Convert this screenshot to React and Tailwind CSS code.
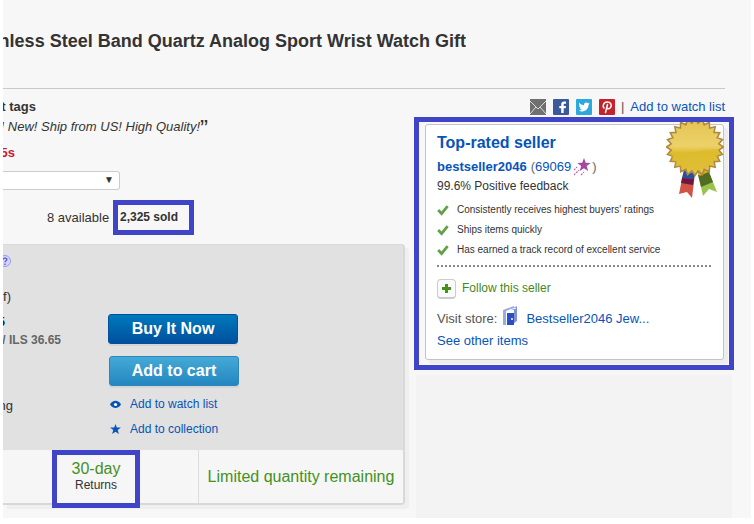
const gold = Array.from({ length: 48 }, (_, i) => {
  const r = i % 2 ? 24 : 28.5;
  const a = (i * Math.PI) / 24;
  return `${(29 + r * Math.sin(a)).toFixed(1)},${(25 - r * Math.cos(a)).toFixed(1)}`;
}).join(" ");

function Clip({ className, children }) {
  return (
    <div className={`flex justify-end overflow-hidden whitespace-nowrap ${className}`}>
      <div className="shrink-0">{children}</div>
    </div>
  );
}

function Medal() {
  return (
    <svg className="absolute -right-px top-[-3px] h-[77px] w-[58px]" viewBox="0 0 58 77" aria-hidden="true">
      <path d="M18 47 29 51 26 76 21 70 13 72Z" fill="#cf5445" />
      <path d="M18 49 29 51 28 57 16 56Z" fill="#2850a0" />
      <path d="M16 56 28 57 27 63 15 61Z" fill="#6c1740" />
      <path d="M32 51 42 48 51 70 43 67 37 74Z" fill="#98c34c" />
      <path d="M32 53 43 50 47 60 35 65Z" fill="#526c22" />
      <path d="M31 50 39 48 42 50 34 54Z" fill="#d7a92e" />
      <defs>
        <linearGradient id="gold" x1="0" y1="0" x2="0" y2="1">
          <stop offset="0" stopColor="#e3c351" />
          <stop offset=".48" stopColor="#ecd16a" />
          <stop offset=".6" stopColor="#dfbd30" />
          <stop offset="1" stopColor="#e2c64a" />
        </linearGradient>
      </defs>
      <polygon points={gold} fill="url(#gold)" stroke="#b18a41" strokeWidth="1.6" />
      <path d="M5 31C19 34 33 26 53 27 52 39 42 48 29 48 17 48 7 42 5 31Z" fill="#ddb92c" opacity=".55" />
    </svg>
  );
}

function Check() {
  return (
    <svg className="h-3 w-3 shrink-0" viewBox="0 0 12 12" aria-hidden="true">
      <path d="M1.2 6 4.6 9.6 10.6 2.2" fill="none" stroke="#63a04a" strokeWidth="2.8" />
    </svg>
  );
}

function Share() {
  const button = "block h-4 w-4 cursor-pointer";
  return (
    <div className="flex h-[28px] items-center justify-end whitespace-nowrap pr-[9px] pt-2 text-[13px] leading-5">
      <div className="flex gap-[7px]">
        <button className={button} aria-label="Email">
          <svg viewBox="0 0 16 16">
            <rect width="16" height="16" fill="#707070" />
            <path d="M0 2 8 10 16 2M0 15 6 8M16 15 10 8" fill="none" stroke="#d9d9d9" strokeWidth="1" />
          </svg>
        </button>
        <button className={button} aria-label="Facebook">
          <svg viewBox="0 0 16 16">
            <rect width="16" height="16" rx="1" fill="#3b5998" />
            <path d="M8.2 14V9.200H6.300V7h1.900V5.400C8.200 3.500 9.300 2.600 11 2.600h2v2.200h-1.300c-.8 0-1 .4-1 1V7H13l-.3 2.200h-2V14Z" fill="#fff" />
          </svg>
        </button>
        <button className={button} aria-label="Twitter">
          <svg viewBox="0 0 16 16">
            <rect width="16" height="16" rx="1" fill="#2ca7e0" />
            <path transform="translate(2.600 2.400) scale(.46)" fill="#fff" d="M23.950 4.570a10 10 0 0 1-2.820.770 4.960 4.960 0 0 0 2.160-2.720c-.95.550-2 .960-3.130 1.180a4.920 4.920 0 0 0-8.380 4.480C7.690 8.090 4.070 6.130 1.640 3.160a4.820 4.820 0 0 0-.67 2.480c0 1.710.87 3.210 2.190 4.100a4.900 4.900 0 0 1-2.230-.62v.06a4.920 4.920 0 0 0 3.950 4.830 5 5 0 0 1-2.210.080 4.940 4.940 0 0 0 4.600 3.420A9.870 9.870 0 0 1 0 19.540a14 14 0 0 0 7.550 2.210c9.050 0 14-7.500 14-13.980 0-.21 0-.42-.02-.63a9.940 9.940 0 0 0 2.420-2.570Z" />
          </svg>
        </button>
        <button className={button} aria-label="Pinterest">
          <svg viewBox="0 0 16 16">
            <rect width="16" height="16" rx="1" fill="#c4232b" />
            <path d="M5 9C3.500 7.500 4 3 8.200 3 12 3 13 6 11.600 8.300 10.300 10.500 8 9.800 7.700 8.500M8.500 5.500 6.500 13.500" fill="none" stroke="#fff" strokeWidth="1.500" strokeLinecap="round" />
          </svg>
        </button>
      </div>
      <span className="mx-1.5 text-[#555]">|</span>
      <a href="#watch" className="text-[#0654ba]">Add to watch list</a>
    </div>
  );
}

function SellerCard() {
  const perks = [
    "Consistently receives highest buyers' ratings",
    "Ships items quickly",
    "Has earned a track record of excellent service",
  ];
  return (
    <section className="border-[5px] border-[#4045c8] pb-[5px] pl-1.5 pr-[5px] pt-0.5">
      <div className="relative rounded-[3px] border border-[#c4c4c4] bg-white px-[11px] pb-2 pt-2 text-[13px] leading-5 shadow-[4px_4px_0_#ededed]">
        <Medal />
        <h2 className="text-base leading-5 font-bold text-[#0654ba]">Top-rated seller</h2>
        <div className="mt-1 flex items-center text-[#666]">
          <a href="#seller" className="text-[#0654ba] font-bold">bestseller2046</a>
          <span className="ml-1">(</span>
          <a href="#feedback" className="text-[#0654ba]">69069</a>
          <svg className="ml-0.5 h-[18px] w-[18px]" viewBox="0 0 18 18" aria-hidden="true">
            <path d="m11 0 1.700 4.800 5 .2-4 3.100 1.400 4.900-4.200-2.800L6.700 13l1.500-4.900-4-3.100 5-.2Z" fill="#a44a9e" />
            <path d="m1 12 3-3M1 17l5-5M8 17l3-3" stroke="#b768b1" strokeWidth="1.300" strokeDasharray="2 1" />
          </svg>
          <span className="ml-px">)</span>
        </div>
        <p className="text-xs leading-[18px] text-[#333]">99.6% Positive feedback</p>
        <ul className="mt-[5px] text-[10px] leading-5 text-[#333]">
          {perks.map((perk) => (
            <li key={perk} className="flex items-center gap-2">
              <Check />
              {perk}
            </li>
          ))}
        </ul>
        <div className="mr-px mt-[5px] border-t-2 border-dotted border-[#888]" />
        <div className="mt-3 flex items-start gap-1.5">
          <button aria-label="Follow" className="flex h-5 w-[19px] items-center justify-center rounded-sm border border-b-2 border-[#ccc] bg-[#fafafa]">
            <svg className="h-[9px] w-[9px]" viewBox="0 0 9 9">
              <path d="M3 0h3v3h3v3H6v3H3V6H0V3h3Z" fill="#44911c" />
            </svg>
          </button>
          <a href="#follow" className="text-xs leading-[18px] text-[#44881c]">Follow this seller</a>
        </div>
        <div className="mt-2 flex h-6 items-center whitespace-nowrap text-[#555]">
          Visit store:
          <svg className="mb-1.5 ml-1.5 h-5 w-[15px]" viewBox="0 0 15 20" aria-hidden="true">
            <path d="M0 4 11 0v3L3 5v14H0Z" fill="#9aacde" />
            <path d="M10 2l4-2v15l-3 2V4H3Z" fill="#7d94d8" />
            <path d="M3 6 6 4 13 2" fill="none" stroke="#fff" strokeWidth="1" />
            <path d="M4 7h7v12H4Z" fill="#2b4ec0" />
            <circle cx="9" cy="13" r="1" fill="#fff" />
          </svg>
          <a href="#store" className="ml-2 text-[#0654ba]">Bestseller2046 Jew...</a>
        </div>
        <a href="#other" className="block text-[#0654ba]">See other items</a>
      </div>
    </section>
  );
}

function BuyPanel() {
  const cta = "block h-[30px] w-[130px] rounded-[3px] border text-base font-bold leading-7 text-white shadow-[0_2px_0_#d5d5d5]";
  return (
    <section className="mr-[9px] rounded-r-[4px] border-r-2 border-t border-b-2 border-[#d8d8d8] bg-[#e1e1e1] shadow-[4px_4px_0_#efefef]">
      <div className="flex h-[205px] text-xs">
        <div className="w-[105px]">
          <svg className="mt-2.5 h-3 w-2" viewBox="4 0 8 12" role="img" aria-label="Help">
            <circle cx="6" cy="6" r="5.500" fill="#d5d5fa" stroke="#9a9af0" />
            <path d="M4.200 4.500C4.500 2.500 8 2.600 7.800 4.600 7.700 5.800 6 5.800 6 7.300M6 8.500V10" fill="none" stroke="#5555e8" strokeWidth="1.300" />
          </svg>
          <Clip className="mt-5 w-2 text-[13px] leading-5 text-[#333]">f)</Clip>
          <Clip className="mt-[5px] w-[2px] text-[13px] leading-5 font-bold text-[#00304a]">5</Clip>
          <Clip className="w-[58px] leading-4 font-bold text-[#666]">/ ILS 36.65</Clip>
          <Clip className="mt-12 w-2.5 text-[13px] leading-5 text-[#333]">ng</Clip>
        </div>
        <div className="pt-[69px]">
          <button className={`${cta} border-[#00509d] bg-linear-to-b from-[#0079bc] to-[#00509d]`}>Buy It Now</button>
          <button className={`${cta} ml-px mt-3 border-[#2a86bd] bg-linear-to-b from-[#45aad6] to-[#2386c0]`}>Add to cart</button>
          <a href="#watch" className="mt-2 flex items-center gap-[9px] pl-[2px] leading-5 text-[#0654ba]">
            <svg className="h-3 w-[11px]" viewBox="0 0 11 12" aria-hidden="true">
              <path d="M0 6.500C2.500 1.500 8.500 1.500 11 6.500 8.500 11 2.500 11 0 6.500Z" fill="#0654ba" />
              <circle cx="5.500" cy="6.500" r="1.600" fill="#fff" />
            </svg>
            Add to watch list
          </a>
          <a href="#collection" className="mt-[5px] flex items-center gap-[9px] pl-[2px] leading-5 text-[#0654ba]">
            <svg className="h-3 w-[11px]" viewBox="0 0 11 12" aria-hidden="true">
              <path d="m5.500 1 1.300 3.600H11L7.700 7 8.900 11 5.500 8.700 2.100 11 3.300 7 0 4.600h4.200Z" fill="#0654ba" />
            </svg>
            Add to collection
          </a>
        </div>
      </div>
      <div className="flex h-[53px] bg-[#f6f6f6]">
        <div className="flex w-[196px] justify-center border-r border-[#ddd] pl-[49px] pr-[58px]">
          <div className="-mb-1 h-[58px] w-[88px] shrink-0 border-[5px] border-[#4045c8] pt-1 text-center">
            <div className="text-base leading-5 text-[#44911c]">30-day</div>
            <div className="text-xs leading-3 text-[#333]">Returns</div>
          </div>
        </div>
        <div className="flex flex-1 items-center justify-center whitespace-nowrap text-base text-[#44911c]">
          Limited quantity remaining
        </div>
      </div>
    </section>
  );
}

export default function App() {
  return (
    <main
      className="mx-[3px] overflow-hidden bg-[#f7f7f7] text-[#333]"
      style={{ fontFamily: '"Liberation Sans", Arial, sans-serif' }}
    >
      <header className="mr-[26px] border-b border-[#c9c9c9] pb-[35px] pt-[29px]">
        <Clip className="w-[463px]">
          <h1 className="text-lg leading-6 font-bold">nless Steel Band Quartz Analog Sport Wrist Watch Gift</h1>
        </Clip>
      </header>
      <div className="flex">
        <div className="min-w-0 flex-1 pb-[13px] pt-2 text-[13px] leading-5">
          <Clip className="w-[33px] font-bold">t tags</Clip>
          <div className="flex h-5 w-[205px] justify-end overflow-hidden whitespace-nowrap">
            <span className="shrink-0 italic">! New! Ship from US! High Quality!</span>
            <span className="text-2xl leading-6">”</span>
          </div>
          <Clip className="mt-1.5 w-3 font-bold text-[#c8202f]">5s</Clip>
          <div className="relative mt-2 w-[117px]">
            <select aria-label="Variation" className="block h-[19px] w-full appearance-none rounded-r-[3px] border border-l-0 border-[#ccc] bg-white">
              <option></option>
            </select>
            <span className="pointer-events-none absolute right-1.5 top-0 text-[10px] leading-[18px]">▼</span>
          </div>
          <div className="mb-[9px] mt-[10px] flex h-[35px] whitespace-nowrap pl-11 leading-[35px]">
            <span className="w-[66px]">8 available</span>
            <span className="w-[81px] border-[5px] border-[#4045c8] pl-0.5 text-xs leading-[25px] font-bold">
              2,325 sold
            </span>
          </div>
          <BuyPanel />
        </div>
        <div className="mr-[17px] flex w-[320px] flex-col">
          <Share />
          <SellerCard />
          <div className="ml-0.5 mr-0.5 mt-[5px] flex-1 bg-[#f3f3f3]" />
        </div>
      </div>
    </main>
  );
}
